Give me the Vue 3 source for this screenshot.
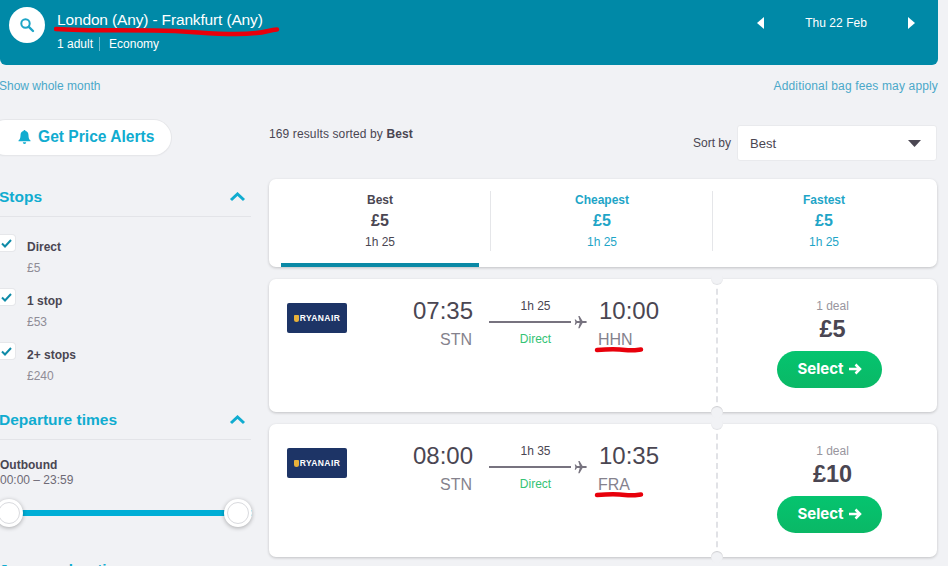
<template>
  <div class="page">
    <header class="topbar">
      <div class="search-btn">
        <svg width="16" height="16" viewBox="0 0 16 16" fill="none" stroke="#1ea5c7" stroke-width="2">
          <circle cx="6.5" cy="6.5" r="4.2" />
          <path d="M9.800 9.800 14 14" stroke-linecap="round" stroke-width="2.400" />
        </svg>
      </div>
      <div class="route">
        <div class="route-title">
          London (Any) - Frankfurt (Any)
          <svg class="scribble route-scribble" width="226" height="12" viewBox="0 0 226 12">
            <path d="M2 3C30 5 60 4 100 4.500s50 3.500 82 3.500 30-4 41-4.500" />
          </svg>
        </div>
        <div class="route-meta"><span class="adults">1 adult</span><span>Economy</span></div>
      </div>
      <div class="date-nav">
        <svg width="8" height="12" viewBox="0 0 8 12"><path d="M7 0v12L0 6z" fill="#fff" /></svg>
        <span>Thu 22 Feb</span>
        <svg width="8" height="12" viewBox="0 0 8 12"><path d="M1 0v12l7-6z" fill="#fff" /></svg>
      </div>
    </header>

    <div class="links">
      <a>Show whole month</a>
      <a class="bag-fees">Additional bag fees may apply</a>
    </div>

    <div class="columns">
      <aside class="sidebar">
        <button class="alert-btn">
          <svg width="13" height="14" viewBox="0 0 13 14">
            <path d="M6.500 0a1 1 0 0 1 1 1.100C9.600 1.600 10.500 3.300 10.500 5.500c0 2.800.8 4 2 5v.8H.5v-.8c1.200-1 2-2.200 2-5 0-2.200.9-3.900 3-4.400a1 1 0 0 1 1-1.100zM4.800 12.300h3.400a1.700 1.700 0 0 1-3.400 0z" fill="#10acd0" />
          </svg>
          Get Price Alerts
        </button>

        <section class="filter stops">
          <div class="filter-head">
            <h3>Stops</h3>
            <svg width="17" height="10" viewBox="0 0 17 10" fill="none"><path d="M2 8l6.500-6L15 8" stroke="#10acd0" stroke-width="3" /></svg>
          </div>
          <div v-for="stop in stops" :key="stop.label" class="stop-row">
            <span class="check">
              <svg width="11" height="9" viewBox="0 0 11 9" fill="none"><path d="M1 4.500 4 7.500 10 1" stroke="#0e8ba8" stroke-width="2" /></svg>
            </span>
            <div class="stop-text">
              <div class="stop-label">{{ stop.label }}</div>
              <div class="stop-price">{{ stop.price }}</div>
            </div>
          </div>
        </section>

        <section class="filter times">
          <div class="filter-head">
            <h3>Departure times</h3>
            <svg width="17" height="10" viewBox="0 0 17 10" fill="none"><path d="M2 8l6.500-6L15 8" stroke="#10acd0" stroke-width="3" /></svg>
          </div>
          <div class="outbound">Outbound</div>
          <div class="range-text">00:00 – 23:59</div>
          <div class="slider">
            <span class="thumb"></span>
            <span class="thumb"></span>
          </div>
        </section>

        <section class="filter journey">
          <div class="filter-head"><h3>Journey duration</h3></div>
        </section>
      </aside>

      <main class="results">
        <div class="results-bar">
          <div class="count">169 results sorted by <b>Best</b></div>
          <div class="sort">
            <span>Sort by</span>
            <div class="sort-select">
              Best
              <svg width="13" height="7" viewBox="0 0 13 7"><path d="M0 0h13L6.500 7z" fill="#4a4652" /></svg>
            </div>
          </div>
        </div>

        <div class="tabs">
          <div v-for="(tab, i) in tabs" :key="tab.name" class="tab" :class="{ active: i === 0 }">
            <div class="tab-name">{{ tab.name }}</div>
            <div class="tab-price">£5</div>
            <div class="tab-time">1h 25</div>
          </div>
        </div>

        <article v-for="flight in flights" :key="flight.arrive" class="ticket">
          <div class="ticket-main">
            <div class="logo"><i></i>RYANAIR</div>
            <div class="leg">
              <div class="time">{{ flight.depart }}</div>
              <div class="code">STN</div>
            </div>
            <div class="middle">
              <div class="dur">{{ flight.duration }}</div>
              <div class="line">
                <span></span>
                <svg width="14" height="14" viewBox="0 0 24 24"><path d="M22 12c0-1-1-1.700-2.500-1.700h-4.800L9.500 1.500H7.300l2.500 8.800H5L3 7.500H1.200L2.400 12 1.200 16.500H3L5 13.700h4.800l-2.500 8.800h2.200l5.200-8.800h4.800C21 13.700 22 13 22 12z" fill="#77737f" /></svg>
              </div>
              <div class="direct">Direct</div>
            </div>
            <div class="leg arrive">
              <div class="time">{{ flight.arrive }}</div>
              <div class="code">
                {{ flight.code }}
                <svg class="scribble" width="50" height="8" viewBox="0 0 50 8">
                  <path d="M3 4c14-1 20-1 28 0s12 0 16-.5" />
                </svg>
              </div>
            </div>
          </div>
          <div class="ticket-side">
            <div class="deal">1 deal</div>
            <div class="price">{{ flight.price }}</div>
            <button class="select">
              Select
              <svg width="14" height="12" viewBox="0 0 14 12" fill="none"><path d="M1 6h11M7.500 1.500 12 6l-4.500 4.500" stroke="#fff" stroke-width="2.500" /></svg>
            </button>
          </div>
        </article>
      </main>
    </div>
  </div>
</template>

<script setup>
const stops = [
  { label: 'Direct', price: '£5' },
  { label: '1 stop', price: '£53' },
  { label: '2+ stops', price: '£240' }
]

const tabs = [{ name: 'Best' }, { name: 'Cheapest' }, { name: 'Fastest' }]

const flights = [
  { depart: '07:35', arrive: '10:00', code: 'HHN', duration: '1h 25', price: '£5' },
  { depart: '08:00', arrive: '10:35', code: 'FRA', duration: '1h 35', price: '£10' }
]
</script>

<style>
html,
body {
  margin: 0;
  height: 566px;
  overflow: hidden;
  background: #f1f2f5;
}
</style>

<style scoped>
.page {
  width: 948px;
  height: 566px;
  overflow: hidden;
  font-family: "Liberation Sans", Arial, sans-serif;
  color: #4a4652;
  background: #f1f2f5;
}

.topbar {
  display: flex;
  align-items: flex-start;
  width: 938px;
  height: 65px;
  box-sizing: border-box;
  padding: 7px 0 0 9px;
  background: #0089a7;
  border-radius: 0 0 6px 6px;
  color: #fff;
}

.search-btn {
  display: flex;
  align-items: center;
  justify-content: center;
  width: 36px;
  height: 36px;
  border-radius: 50%;
  background: #fff;
}

.route {
  margin-left: 12px;
}

.route-title {
  position: relative;
  font-size: 15.500px;
  letter-spacing: -0.15px;
  line-height: 25px;
}

.scribble {
  position: absolute;
  fill: none;
  stroke: #e8000b;
  stroke-width: 4.500;
  stroke-linecap: round;
}

.route-scribble {
  left: -3px;
  top: 19px;
}

.route-meta {
  display: flex;
  align-items: center;
  font-size: 12px;
  line-height: 14px;
  margin-top: 5px;
}

.adults {
  padding-right: 6px;
  margin-right: 9px;
  border-right: 1px solid #6cbccf;
}

.date-nav {
  display: flex;
  align-items: center;
  gap: 40px;
  margin-left: auto;
  margin-right: 23px;
  margin-top: 9px;
  height: 14px;
  font-size: 12px;
  letter-spacing: 0.05px;
}

.links {
  display: flex;
  justify-content: space-between;
  width: 939px;
  margin: 14px 0 0 -1px;
  font-size: 12px;
  line-height: 14px;
  color: #4ba8c9;
}

.bag-fees {
  letter-spacing: 0.15px;
}

.columns {
  display: flex;
  margin-left: -12px;
  margin-top: 27px;
}

.sidebar {
  width: 263px;
  flex: none;
}

.alert-btn {
  display: flex;
  align-items: center;
  gap: 7px;
  width: 183px;
  height: 35px;
  margin: 0;
  padding: 0 0 1px 30px;
  border: 0;
  border-radius: 18px;
  background: #fff;
  box-shadow: 0 0 0 1px #e6e7ea, 0 1px 2px rgba(0, 0, 0, 0.06);
  color: #10acd0;
  font: bold 15.600px "Liberation Sans", Arial, sans-serif;
}

.filter {
  padding-left: 12px;
}

.stops {
  margin-top: 27px;
}

.filter-head {
  display: flex;
  align-items: center;
  justify-content: space-between;
  height: 30px;
  padding: 0 5px 4px 0;
  border-bottom: 1px solid #e3e4e8;
}

.filter h3 {
  margin: 0 0 0 -1px;
  font-size: 15.500px;
  font-weight: bold;
  color: #10acd0;
}

.stop-row {
  display: flex;
  height: 54px;
}

.filter-head + .stop-row {
  margin-top: 18px;
}

.check {
  display: flex;
  align-items: center;
  justify-content: center;
  width: 17px;
  height: 16px;
  margin: 0 12px 0 -2px;
  background: #fff;
  border-radius: 3px;
  box-shadow: 0 0 0 1px #e6e7ea;
}

.stop-text {
  padding-top: 4px;
}

.stop-label {
  font-size: 12px;
  font-weight: bold;
  line-height: 16px;
}

.stop-price {
  margin-top: 5px;
  font-size: 12px;
  line-height: 16px;
  color: #8f8c96;
}

.times {
  margin-top: 8px;
}

.outbound {
  margin-top: 18px;
  font-size: 12px;
  font-weight: bold;
  line-height: 15px;
}

.range-text {
  font-size: 12px;
  line-height: 15px;
  color: #6e6a75;
}

.slider {
  display: flex;
  align-items: center;
  justify-content: space-between;
  height: 6px;
  margin: 22px -1px 0 -5px;
  background: #00aed6;
}

.thumb {
  box-sizing: border-box;
  width: 28px;
  height: 28px;
  border-radius: 50%;
  background: #fff;
  border: 2px solid #fff;
  outline: 1px solid #d9dade;
  outline-offset: -4px;
  box-shadow: 0 1px 4px rgba(0, 0, 0, 0.3);
}

.journey {
  margin-top: 39px;
}

.results {
  width: 668px;
  margin-left: 18px;
  flex: none;
}

.results-bar {
  display: flex;
  justify-content: space-between;
  height: 50px;
}

.count {
  margin-top: 7px;
  font-size: 12px;
  letter-spacing: 0.12px;
  line-height: 14px;
}

.sort {
  display: flex;
  align-items: center;
  gap: 6px;
  height: 36px;
  margin-top: 5px;
  font-size: 12px;
}

.sort-select {
  display: flex;
  align-items: center;
  justify-content: space-between;
  box-sizing: border-box;
  width: 200px;
  height: 36px;
  padding: 0 15px 0 12px;
  background: #fff;
  border: 1px solid #e9eaed;
  border-radius: 3px;
  font-size: 13px;
}

.tabs {
  display: flex;
  height: 88px;
  margin-top: 9px;
  background: #fff;
  border-radius: 7px;
  box-shadow: 0 1px 3px rgba(0, 0, 0, 0.2);
  padding: 0 2px 0 12px;
  box-sizing: border-box;
}

.tab {
  position: relative;
  flex: 1;
  padding-top: 13px;
  text-align: center;
  color: #1ea5c7;
}

.tab + .tab::before {
  content: "";
  position: absolute;
  left: -1px;
  top: 12px;
  height: 60px;
  border-left: 1px solid #e5e6e9;
}

.tab.active {
  flex: none;
  width: 198px;
  margin-right: 12px;
  color: #4a4652;
  border-bottom: 4px solid #0b89a6;
}

.tab-name {
  font-size: 12px;
  font-weight: bold;
  line-height: 16px;
}

.tab-price {
  margin-top: 3px;
  font-size: 16px;
  font-weight: bold;
  line-height: 20px;
}

.tab-time {
  margin-top: 3px;
  font-size: 12px;
  line-height: 16px;
}

.ticket {
  position: relative;
  display: flex;
  height: 133px;
  margin-top: 12px;
  background: #fff;
  border-radius: 7px;
  box-shadow: 0 1px 3px rgba(0, 0, 0, 0.2);
}

.ticket::before,
.ticket::after {
  content: "";
  position: absolute;
  left: 442px;
  width: 12px;
  height: 12px;
  border-radius: 50%;
  background: #f1f2f5;
}

.ticket::before {
  top: -6px;
  box-shadow: inset 0 -1px 1px rgba(0, 0, 0, 0.06);
}

.ticket::after {
  bottom: -6px;
  box-shadow: inset 0 1px 1px rgba(0, 0, 0, 0.14);
}

.ticket-main {
  display: flex;
  align-items: flex-start;
  width: 449px;
  box-sizing: border-box;
  padding: 24px 0 0 18px;
  border-right: 2px dashed #e1e2e6;
}

.logo {
  display: flex;
  align-items: center;
  justify-content: center;
  gap: 1px;
  width: 60px;
  height: 30px;
  background: #1d3466;
  border-radius: 2px;
  color: #fff;
  font-size: 8.500px;
  letter-spacing: 0.4px;
  font-weight: bold;
}

.logo i {
  width: 5px;
  height: 7px;
  background: #e8b13a;
  border-radius: 1px 1px 3px 3px;
}

.leg {
  width: 59px;
  margin-top: -6px;
  margin-left: 66px;
  text-align: right;
}

.time {
  font-size: 24px;
  line-height: 28px;
}

.code {
  position: relative;
  margin-top: 5px;
  font-size: 16px;
  line-height: 20px;
  color: #85828d;
}

.code .scribble {
  left: -4px;
  top: 16px;
}

.middle {
  width: 104px;
  margin-top: -6px;
  margin-left: 17px;
  text-align: center;
}

.dur {
  font-size: 12px;
  line-height: 14px;
  margin-top: 2px;
  padding-right: 11px;
}

.line {
  display: flex;
  align-items: center;
  height: 13px;
  gap: 3px;
  margin-top: 2px;
}

.line span {
  width: 82px;
  height: 2px;
  background: #77737f;
}

.direct {
  margin-top: 4px;
  padding-right: 11px;
  font-size: 12px;
  line-height: 14px;
  color: #34c374;
}

.arrive {
  width: auto;
  margin-left: 6px;
  text-align: left;
}

.arrive .code {
  margin-left: -1px;
}

.ticket-side {
  flex: 1;
  display: flex;
  flex-direction: column;
  align-items: center;
  padding: 20px 0 0 4px;
}

.deal {
  margin-left: 6px;
  font-size: 12px;
  line-height: 14px;
  color: #98959e;
}

.price {
  margin: 3px 0 0 6px;
  font-size: 23.500px;
  font-weight: bold;
  line-height: 27px;
}

.select {
  display: flex;
  align-items: center;
  justify-content: center;
  gap: 4px;
  width: 105px;
  height: 37px;
  margin-top: 8px;
  padding: 0 0 2px;
  border: 0;
  border-radius: 19px;
  background: linear-gradient(#05c46f, #0ab866);
  color: #fff;
  font: bold 15px Inter, "Liberation Sans", sans-serif;
}
</style>
